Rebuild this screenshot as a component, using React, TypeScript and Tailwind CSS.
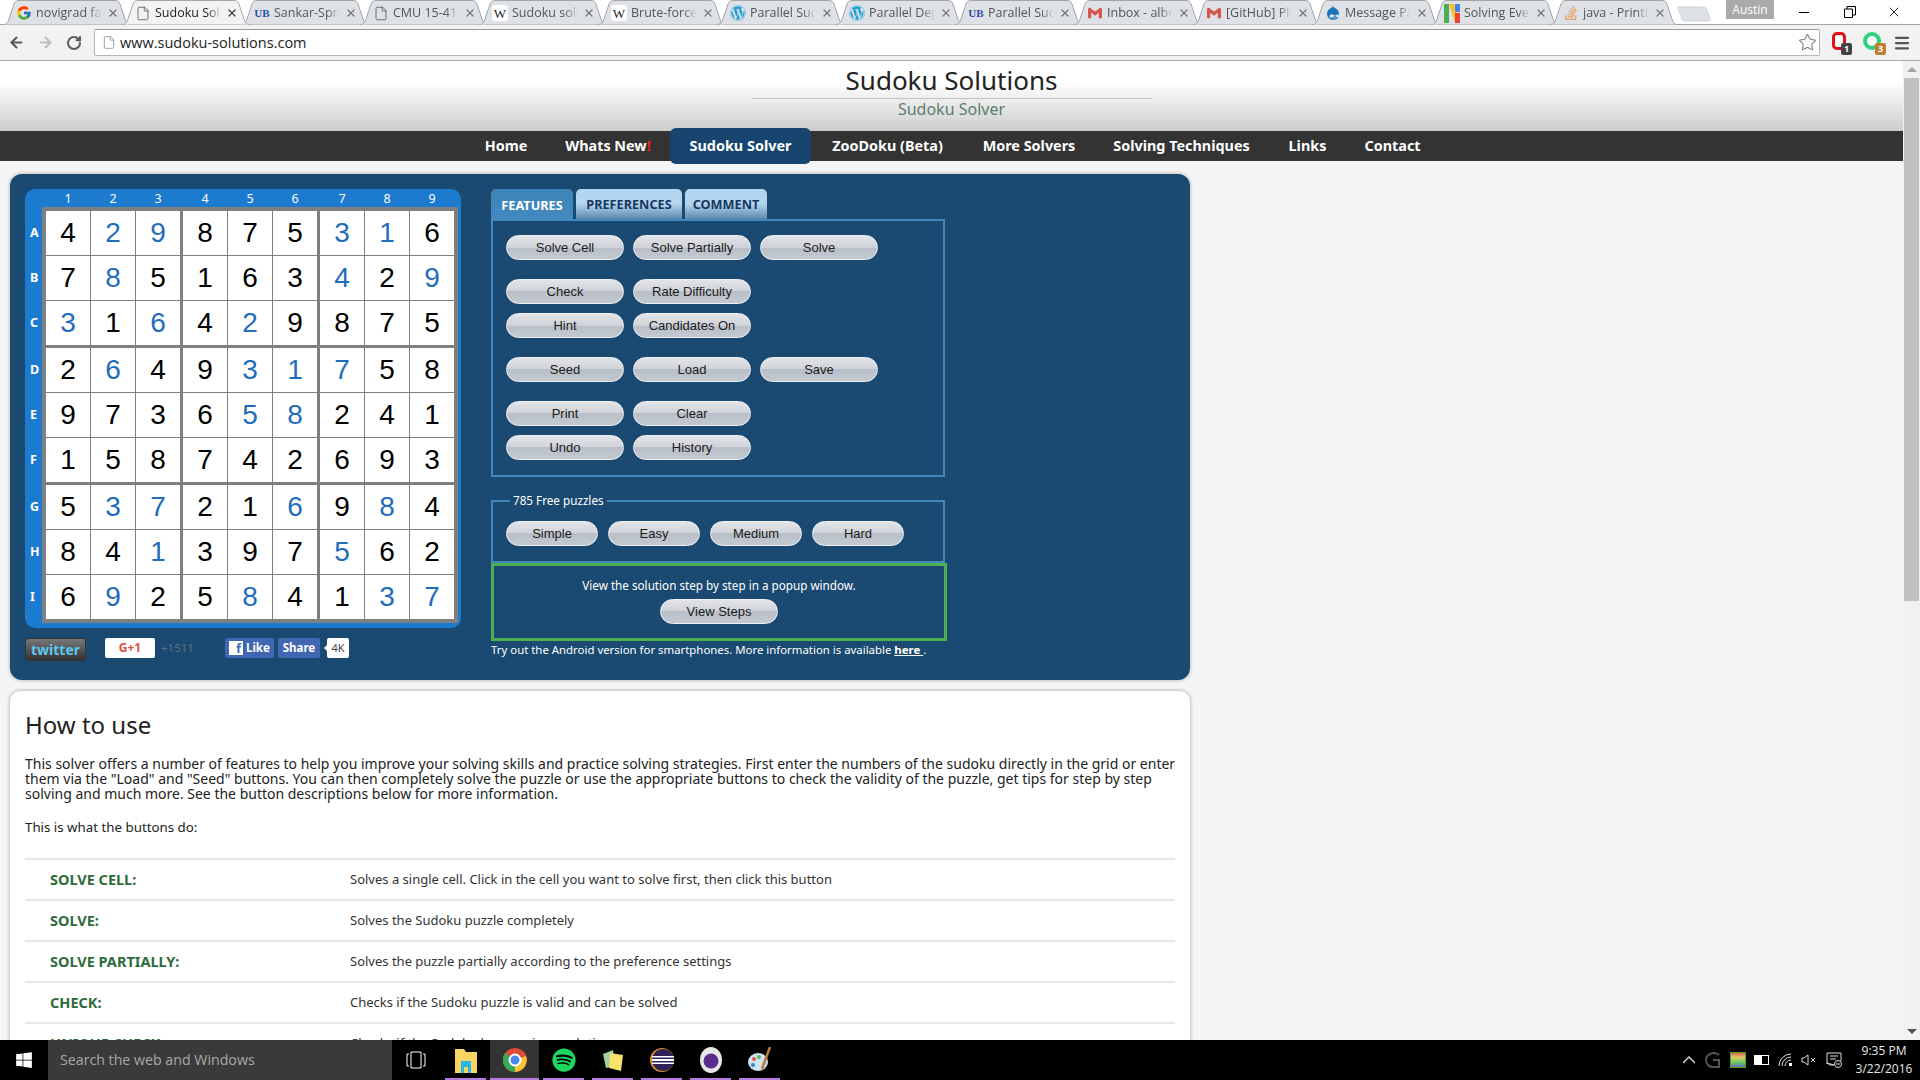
import type { ReactNode } from "react";
import { ArrowLeft, ArrowRight, File, Menu, RotateCw, Star, X } from "lucide-react";
import { FaDrupal, FaSpotify, FaStackOverflow, FaWindows, FaWordpress } from "react-icons/fa";
import { FcGoogle } from "react-icons/fc";
import { SiGmail } from "react-icons/si";

const ub = <span className="w-[16px] text-center text-[11px] font-bold leading-none text-[#2a4fa8] [font-family:'Liberation_Serif',serif]">UB</span>;
const wiki = <span className="flex h-[16px] w-[16px] items-center justify-center rounded-[3px] bg-white text-[13px] leading-none text-[#222] [font-family:'Liberation_Serif',serif]">W</span>;
const doc = <File className="h-[15px] w-[16px] text-[#555]" strokeWidth={1.3} />;
const wp = <FaWordpress className="h-[16px] w-[16px] text-[#21a0d6]" />;
const gmail = <SiGmail className="h-[14px] w-[16px] text-[#d5584c]" />;
const docsN = (
  <svg width="16" height="19" viewBox="0 0 16 19">
    <rect x="0" y="0" width="5" height="19" fill="#4caf50" />
    <path d="M5 0 L11 19 H16 V15 L10 0Z" fill="#fbc02d" />
    <rect x="11" y="0" width="5" height="8" fill="#4285f4" />
    <rect x="11" y="9" width="5" height="10" fill="#ea4335" />
  </svg>
);

// titles are cut where the tab cuts them in the screenshot
const tabs: { title: string; icon: ReactNode; active?: boolean }[] = [
  { title: "novigrad fas", icon: <FcGoogle className="h-[16px] w-[16px]" /> },
  { title: "Sudoku Solu", icon: doc, active: true },
  { title: "Sankar-Sprir", icon: ub },
  { title: "CMU 15-418", icon: doc },
  { title: "Sudoku solv", icon: wiki },
  { title: "Brute-force", icon: wiki },
  { title: "Parallel Sudo", icon: wp },
  { title: "Parallel Dep", icon: wp },
  { title: "Parallel Sudo", icon: ub },
  { title: "Inbox - albe", icon: gmail },
  { title: "[GitHub] Ple", icon: gmail },
  { title: "Message Pa", icon: <FaDrupal className="h-[16px] w-[16px] text-[#1b78b8]" /> },
  { title: "Solving Ever", icon: docsN },
  { title: "java - Printir", icon: <FaStackOverflow className="h-[16px] w-[16px] text-[#e8a063]" /> },
];

function ChromeTab({ title, icon, active }: { title: string; icon: ReactNode; active?: boolean }) {
  return (
    <div className={`relative -ml-[9px] h-[25px] w-[128px] shrink-0 ${active ? "z-10" : ""}`}>
      <svg width="128" height="25" viewBox="0 0 128 25" className="absolute inset-0">
        <path
          d="M0 24.5 C4 24.5 5 22 6 19 L11 4 C12 1.5 13.5 .5 16 .5 H112 C114.5 .5 116 1.5 117 4 L122 19 C123 22 124 24.5 128 24.5"
          fill={active ? "#f2f2f2" : "#dee1e6"}
          stroke="#a3a5a9"
        />
      </svg>
      <div className="relative flex h-full items-center pl-[13px] pt-px">
        <div className="flex w-[20px] shrink-0 items-center">{icon}</div>
        <span className={`w-[66px] overflow-hidden whitespace-nowrap text-[12.5px] [mask-image:linear-gradient(90deg,#000_80%,transparent)] ${active ? "text-[#222]" : "text-[#555]"}`}>
          {title}
        </span>
        <X className={`ml-[5px] h-[12px] w-[12px] ${active ? "text-[#444]" : "text-[#777]"}`} strokeWidth={2.6} />
      </div>
    </div>
  );
}

function TabStrip() {
  return (
    <div className="relative flex h-[25px] shrink-0 bg-white pl-[12px] [font-family:'Open_Sans',sans-serif]">
      <div className="absolute inset-x-0 bottom-0 h-px bg-[#a3a5a9]" />
      {tabs.map((t, i) => (
        <ChromeTab key={i} {...t} />
      ))}
      <svg width="34" height="16" viewBox="0 0 34 16" className="relative -ml-px mt-[6px]">
        <path d="M1 1 H26 C28 1 29 2 30 4 L33 13 C33.5 15 32 15 31 15 H8 C6 15 5 14 4.5 12 L1 2Z" fill="#dee1e6" stroke="#d0d3d8" />
      </svg>
      <div className="ml-[15px] flex h-[19px] w-[48px] items-center justify-center bg-[#aaaaaa] text-[12px] text-white">Austin</div>
      <div className="ml-[25px] flex h-[24px] items-center">
        <div className="h-px w-[10px] bg-black" />
        <svg width="12" height="12" viewBox="0 0 12 12" className="ml-[35px]">
          <path d="M.5 3 H8.5 V11.5 H.5Z M3 3 V.5 H11.5 V9 H8.5" fill="none" stroke="#000" />
        </svg>
        <X className="ml-[30px] h-[16px] w-[16px] text-black" strokeWidth={1.2} />
      </div>
    </div>
  );
}

function Toolbar() {
  return (
    <div className="flex h-[36px] shrink-0 items-center border-b border-[#a9a9a9] bg-[#f2f2f2]">
      <ArrowLeft className="ml-[8px] h-[17px] w-[17px] text-[#5a5a5a]" strokeWidth={3} />
      <ArrowRight className="ml-[12px] h-[17px] w-[17px] text-[#bdbdbd]" strokeWidth={3} />
      <RotateCw className="ml-[12px] h-[16px] w-[16px] text-[#5a5a5a]" strokeWidth={3} />
      <div className="ml-[12px] flex h-[27px] w-[1726px] items-center rounded-[2px] border border-[#b5b5b5] border-t-[#9a9a9a] bg-white pl-[7px]">
        <File className="h-[15px] w-[14px] text-[#888]" strokeWidth={1.3} />
        <span className="ml-[4px] text-[14.5px] text-[#222] [font-family:'Open_Sans',sans-serif]">www.sudoku-solutions.com</span>
        <Star className="ml-auto mr-[2px] h-[19px] w-[19px] text-[#777]" strokeWidth={1.3} />
      </div>
      <div className="relative ml-[10px] h-[24px] w-[24px]">
        <div className="ml-[2px] mt-[1px] h-[18px] w-[14px] rounded-[5px] border-[3px] border-[#e3101a] bg-white" />
        <span className="absolute bottom-0 right-[2px] flex h-[12px] w-[11px] items-center justify-center rounded-[2px] bg-[#444] text-[9px] font-bold text-white">1</span>
      </div>
      <div className="relative ml-[8px] h-[24px] w-[24px]">
        <div className="ml-[1px] mt-[1px] h-[18px] w-[18px] rounded-full border-[4px] border-[#2fd080] bg-white" />
        <span className="absolute bottom-0 right-0 flex h-[12px] w-[11px] items-center justify-center rounded-[2px] bg-[#c07f30] text-[9px] font-bold text-white">3</span>
      </div>
      <Menu className="ml-[7px] h-[18px] w-[18px] text-[#555]" strokeWidth={3} />
    </div>
  );
}

const navItems = [
  { label: "Home", w: "w-[80px]" },
  { label: "Whats New", w: "w-[124px]", bang: true },
  { label: "Sudoku Solver", w: "w-[141px]", active: true },
  { label: "ZooDoku (Beta)", w: "w-[153px]" },
  { label: "More Solvers", w: "w-[130px]" },
  { label: "Solving Techniques", w: "w-[175px]" },
  { label: "Links", w: "w-[77px]" },
  { label: "Contact", w: "w-[93px]" },
];

function SiteHeader() {
  return (
    <>
      <div className="flex h-[70px] shrink-0 flex-col items-center bg-[linear-gradient(#fff_30%,#cdcdcd_100%)]">
        <h1 className="mt-[2px] h-[35px] text-[26px] leading-[35px] text-[#222]">Sudoku Solutions</h1>
        <div className="h-px w-[400px] bg-[#c4c4c4]" />
        <p className="-mt-px text-[16px] leading-[22px] text-[#5c7d6c]">Sudoku Solver</p>
      </div>
      <nav className="flex h-[30px] shrink-0 items-center bg-[#333333] pl-[466px] text-[14.4px] font-bold text-white">
        {navItems.map((n) => (
          <div
            key={n.label}
            className={`flex shrink-0 items-center justify-center ${n.w} ${n.active ? "z-10 h-[36px] rounded-[6px] bg-[#17456f]" : "h-[30px]"}`}
          >
            {n.label}
            {n.bang && <span className="text-[#e8212a]">!</span>}
          </div>
        ))}
      </nav>
    </>
  );
}

const grid = ["429875316", "785163429", "316429875", "264931758", "973658241", "158742693", "537216984", "841397562", "692584137"];
const solved = [
  "011000110",
  "010000101",
  "101010000",
  "010011100",
  "000011000",
  "000000000",
  "011001010",
  "001000100",
  "010010011",
];
const colGap = ["", "ml-px", "ml-px", "ml-[3px]", "ml-px", "ml-px", "ml-[3px]", "ml-px", "ml-px"];
const rowGap = ["", "mt-px", "mt-px", "mt-[3px]", "mt-px", "mt-px", "mt-[3px]", "mt-px", "mt-px"];

function SudokuBoard() {
  return (
    <div className="h-[439px] w-[436px] rounded-[10px] bg-[#1c7acf]">
      <div className="flex h-[18px] items-center pl-[21px] pt-[3px] text-[12.5px] text-white">
        {colGap.map((g, i) => (
          <div key={i} className={`w-[44px] text-center ${g}`}>{i + 1}</div>
        ))}
      </div>
      <div className="flex">
        <div className="w-[17px] pt-[4px] text-[12.5px] font-bold text-white">
          {"ABCDEFGHI".split("").map((l, i) => (
            <div key={l} className={`flex h-[44px] items-center pl-[5px] ${rowGap[i]}`}>{l}</div>
          ))}
        </div>
        <div className="h-[416px] w-[416px] bg-[#808080] p-[4px] text-[28px] [font-family:'Liberation_Sans',sans-serif]">
          {grid.map((row, r) => (
            <div key={r} className={`flex ${rowGap[r]}`}>
              {row.split("").map((d, c) => (
                <div
                  key={c}
                  className={`flex h-[44px] w-[44px] items-center justify-center bg-white ${colGap[c]} ${solved[r][c] === "1" ? "text-[#1f6dbb]" : "text-black"}`}
                >
                  {d}
                </div>
              ))}
            </div>
          ))}
        </div>
      </div>
    </div>
  );
}

function Socials() {
  return (
    <div className="mt-[10px] flex items-start">
      <div className="flex h-[23px] w-[61px] items-center justify-center rounded-[3px] border border-[#333] bg-[linear-gradient(#777,#333)] text-[14px] font-bold text-[#5cc8f0]">twitter</div>
      <div className="ml-[19px] flex h-[20px] w-[50px] items-center justify-center rounded-[2px] bg-white text-[12px] font-bold text-[#dc4e41]">G+1</div>
      <div className="ml-[6px] w-[64px] text-[11.5px] leading-[20px] text-[#5e7286]">+1511</div>
      <div className="flex h-[20px] w-[49px] items-center rounded-[2px] bg-[#4267b2] text-[11.5px] font-bold text-white">
        <span className="ml-[4px] flex h-[14px] w-[14px] items-end justify-end bg-white pr-[2px] text-[12px] leading-none text-[#4267b2]">f</span>
        <span className="ml-[3px]">Like</span>
      </div>
      <div className="ml-[4px] flex h-[20px] w-[42px] items-center justify-center rounded-[2px] bg-[#4267b2] text-[11.5px] font-bold text-white">Share</div>
      <div className="relative ml-[7px] flex h-[20px] w-[22px] items-center justify-center rounded-[2px] bg-white text-[11px] text-[#444]">
        <div className="absolute -left-[3px] h-0 w-0 border-y-[3px] border-r-[3px] border-y-transparent border-r-white" />
        4K
      </div>
    </div>
  );
}

function Pill({ label, w = "w-[118px]" }: { label: string; w?: string }) {
  return (
    <button className={`h-[25px] ${w} rounded-full border border-[#eef0f2] bg-[linear-gradient(#e2e4e8_0%,#cfd2d8_50%,#b8bfc8_50%,#c3c9d1_100%)] text-[13px] text-[#1c1c1c] [font-family:'Liberation_Sans',sans-serif]`}>
      {label}
    </button>
  );
}

const featureGroups = [
  [["Solve Cell", "Solve Partially", "Solve"]],
  [["Check", "Rate Difficulty"], ["Hint", "Candidates On"]],
  [["Seed", "Load", "Save"]],
  [["Print", "Clear"], ["Undo", "History"]],
];

function FeaturePanel() {
  return (
    <div className="ml-[30px] w-[456px] text-white">
      <div className="flex h-[30px] items-start gap-[3px] text-[12.7px] font-bold">
        <div className="flex h-[32px] w-[82px] items-center justify-center rounded-t-[5px] bg-[linear-gradient(#3d85b8,#4389c0)] pt-[2px]">FEATURES</div>
        <div className="flex h-[30px] w-[106px] items-center justify-center rounded-t-[5px] bg-[linear-gradient(#b3d5ef_50%,#5c86aa)] pt-[2px] text-[#17375e]">PREFERENCES</div>
        <div className="flex h-[30px] w-[82px] items-center justify-center rounded-t-[5px] bg-[linear-gradient(#b3d5ef_50%,#5c86aa)] pt-[2px] text-[#17375e]">COMMENT</div>
      </div>
      <div className="flex h-[258px] w-[454px] flex-col gap-[19px] border-2 border-[#3f87bd] pl-[13px] pt-[14px]">
        {featureGroups.map((group, g) => (
          <div key={g} className="flex flex-col gap-[9px]">
            {group.map((row) => (
              <div key={row[0]} className="flex gap-[9px]">
                {row.map((b) => (
                  <Pill key={b} label={b} />
                ))}
              </div>
            ))}
          </div>
        ))}
      </div>
      <fieldset className="mt-[15px] h-[71px] w-[454px] border-2 border-[#3f87bd] pl-[13px]">
        <legend className="ml-[4px] px-[3px] pb-px text-[11.7px] leading-[16px]">785 Free puzzles</legend>
        <div className="mt-[12px] flex gap-[10px]">
          {["Simple", "Easy", "Medium", "Hard"].map((b) => (
            <Pill key={b} label={b} w="w-[92px]" />
          ))}
        </div>
      </fieldset>
      <div className="flex h-[78px] w-[456px] flex-col items-center border-[3px] border-[#4caf50] pt-[11px] text-[11.7px]">
        <p className="h-[22px] leading-[17px]">View the solution step by step in a popup window.</p>
        <Pill label="View Steps" />
      </div>
      <p className="whitespace-nowrap text-[11.4px] leading-[18px]">
        Try out the Android version for smartphones. More information is available <a className="font-bold underline">here </a>.
      </p>
    </div>
  );
}

const descriptions = [
  ["SOLVE CELL:", "Solves a single cell. Click in the cell you want to solve first, then click this button"],
  ["SOLVE:", "Solves the Sudoku puzzle completely"],
  ["SOLVE PARTIALLY:", "Solves the puzzle partially according to the preference settings"],
  ["CHECK:", "Checks if the Sudoku puzzle is valid and can be solved"],
  ["UNIQUE CHECK:", "Checks if the Sudoku has a unique solution"],
];

function HowToUse() {
  return (
    <section className="ml-[10px] mt-[11px] w-[1180px] rounded-t-[10px] bg-white px-[15px] pt-[17px] shadow-[0_0_4px_rgba(0,0,0,0.35)]">
      <h2 className="h-[33px] text-[24px] leading-[33px] text-[#222]">How to use</h2>
      <p className="mt-[15px] whitespace-nowrap text-[14px] leading-[15px] text-[#222]">
        This solver offers a number of features to help you improve your solving skills and practice solving strategies. First enter the numbers of the sudoku directly in the grid or enter<br />
        them via the "Load" and "Seed" buttons. You can then completely solve the puzzle or use the appropriate buttons to check the validity of the puzzle, get tips for step by step<br />
        solving and much more. See the button descriptions below for more information.
      </p>
      <p className="mt-[19px] text-[13.3px] leading-[15px] text-[#222]">This is what the buttons do:</p>
      <div className="mt-[23px]">
        {descriptions.map(([label, text]) => (
          <div key={label} className="flex h-[41px] items-center border-t-2 border-[#e8e8e8]">
            <span className="w-[325px] pl-[25px] text-[14.5px] font-bold text-[#2e6b3a]">{label}</span>
            <span className="text-[13px] text-[#333]">{text}</span>
          </div>
        ))}
      </div>
    </section>
  );
}

function Scrollbar() {
  return (
    <div className="flex w-[17px] shrink-0 flex-col items-center bg-[#f1f1f1]">
      <div className="mt-[6px] h-0 w-0 border-x-[5px] border-b-[5px] border-x-transparent border-b-[#a3a3a3]" />
      <div className="mt-[6px] h-[523px] w-[15px] bg-[#c1c1c1]" />
      <div className="mt-auto mb-[6px] h-0 w-0 border-x-[5px] border-t-[5px] border-x-transparent border-t-[#505050]" />
    </div>
  );
}

function TaskApp({ children, active }: { children: ReactNode; active?: boolean }) {
  return (
    <div className={`relative flex h-[40px] w-[49px] items-center justify-center ${active ? "bg-[#333333]" : ""}`}>
      {children}
      <div className={`absolute bottom-0 h-[2px] bg-[#b57be0] ${active ? "inset-x-0" : "inset-x-[4px]"}`} />
    </div>
  );
}

function Taskbar() {
  return (
    <div className="flex h-[40px] shrink-0 items-center bg-black text-white">
      <FaWindows className="ml-[15px] h-[18px] w-[18px]" />
      <div className="ml-[15px] flex h-[40px] w-[344px] items-center bg-[#3a3a3a] pl-[12px] text-[14.2px] text-[#a8a8a8] [font-family:'Open_Sans',sans-serif]">Search the web and Windows</div>
      <svg width="20" height="18" viewBox="0 0 20 18" className="ml-[14px]">
        <path d="M5 1 H15 V17 H5Z M3 3 H1 V15 H3 M17 3 H19 V15 H17" fill="none" stroke="#fff" />
      </svg>
      <div className="ml-[15px] flex">
        <TaskApp>
          <svg width="22" height="26" viewBox="0 0 22 26">
            <path d="M0 2 H9 L11 5 H22 V26 H0Z" fill="#f6d565" />
            <rect x="6" y="14" width="10" height="12" fill="#29b6e8" />
            <rect x="9" y="20" width="4" height="6" fill="#f6d565" />
          </svg>
        </TaskApp>
        <TaskApp active>
          <svg width="24" height="24" viewBox="0 0 24 24">
            <circle cx="12" cy="12" r="12" fill="#dd4b39" />
            <path d="M12 12 L2 5 A12 12 0 0 0 12 24Z" fill="#3aa757" />
            <path d="M12 12 L23 8 A12 12 0 0 1 12 24Z" fill="#f9c530" />
            <circle cx="12" cy="12" r="5.5" fill="#4a8af0" stroke="#fff" strokeWidth="2" />
          </svg>
        </TaskApp>
        <TaskApp><FaSpotify className="h-[24px] w-[24px] text-[#1ed760]" /></TaskApp>
        <TaskApp>
          <svg width="24" height="24" viewBox="0 0 24 24">
            <path d="M2 6 L12 2 L14 18 L5 20Z" fill="#9fd39b" />
            <path d="M9 5 L22 7 L20 23 L8 20Z" fill="#f7e26b" />
          </svg>
        </TaskApp>
        <TaskApp>
          <svg width="24" height="24" viewBox="0 0 24 24">
            <circle cx="12" cy="12" r="12" fill="#e08a2a" />
            <circle cx="13" cy="12" r="11" fill="#2c2255" />
            <path d="M2 8 H24 V9.5 H2Z M2 11 H24 V13 H2Z M2 14.5 H24 V16 H2Z" fill="#fff" />
          </svg>
        </TaskApp>
        <TaskApp>
          <svg width="22" height="26" viewBox="0 0 22 26">
            <ellipse cx="11" cy="13" rx="11" ry="13" fill="#e8e8e8" />
            <circle cx="11" cy="14" r="7.5" fill="#5b2d8e" />
          </svg>
        </TaskApp>
        <TaskApp>
          <svg width="24" height="26" viewBox="0 0 24 26">
            <ellipse cx="10" cy="15" rx="10" ry="9" fill="#cfe4ee" />
            <circle cx="6" cy="12" r="2" fill="#e05a4e" />
            <circle cx="11" cy="10" r="2" fill="#5bb85b" />
            <circle cx="5" cy="18" r="2" fill="#3d7fd6" />
            <path d="M22 0 L14 22" stroke="#b8793a" strokeWidth="2.5" />
          </svg>
        </TaskApp>
      </div>
      <svg width="12" height="8" viewBox="0 0 12 8" className="ml-[899px]">
        <path d="M0 7 L6 1 L12 7" fill="none" stroke="#ddd" strokeWidth="1.4" />
      </svg>
      <svg width="16" height="16" viewBox="0 0 16 16" className="ml-[10px]">
        <path d="M14 3 C9 -1 1 2 1 8 C1 13 5 15 8 15 H14 V8 H8" fill="none" stroke="#555" strokeWidth="2" />
      </svg>
      <div className="ml-[9px] h-[16px] w-[16px] border border-[#5aa000] bg-[linear-gradient(#d66,#dc6,#6c6,#66c)]" />
      <div className="relative ml-[8px] flex h-[10px] w-[15px] items-center border border-white">
        <div className="h-full w-[7px] bg-white" />
      </div>
      <svg width="16" height="14" viewBox="0 0 16 14" className="ml-[9px]">
        <path d="M1 13 A12 12 0 0 1 13 1 M4 13 A9 9 0 0 1 13 4 M7 13 A6 6 0 0 1 13 7" fill="none" stroke="#ddd" />
        <rect x="11" y="10" width="3" height="3" fill="#fff" />
      </svg>
      <svg width="16" height="12" viewBox="0 0 16 12" className="ml-[7px]">
        <path d="M1 4 H3 L7 1 V11 L3 8 H1Z M10 4 L14 8 M14 4 L10 8" fill="none" stroke="#ddd" />
      </svg>
      <svg width="17" height="16" viewBox="0 0 17 16" className="ml-[9px]">
        <path d="M1 1 H15 V9 M8 13 H4 L1 11Z M1 1 V12 M4 4 H12 M4 7 H10" fill="none" stroke="#ddd" />
        <circle cx="12" cy="12" r="3.5" fill="#000" stroke="#ddd" />
        <path d="M10 12 H14" stroke="#ddd" />
      </svg>
      <div className="ml-[11px] w-[60px] text-center text-[12px] leading-[18px] text-[#e8e8e8] [font-family:'Open_Sans',sans-serif]">
        9:35 PM<br />3/22/2016
      </div>
    </div>
  );
}

export default function App() {
  return (
    <div className="flex h-screen w-[1920px] flex-col overflow-hidden bg-white [font-family:'Noto_Sans',sans-serif]">
      <TabStrip />
      <Toolbar />
      <div className="flex min-h-0 flex-1">
        <main className="min-w-0 flex-1 overflow-hidden bg-[#f5f5f5]">
          <SiteHeader />
          <div className="ml-[10px] mt-[13px] flex h-[506px] w-[1180px] rounded-[12px] bg-[#1a4971] pl-[15px] pt-[15px] shadow-[0_0_4px_rgba(0,0,0,0.3)]">
            <div className="w-[436px] shrink-0">
              <SudokuBoard />
              <Socials />
            </div>
            <FeaturePanel />
          </div>
          <HowToUse />
        </main>
        <Scrollbar />
      </div>
      <Taskbar />
    </div>
  );
}
